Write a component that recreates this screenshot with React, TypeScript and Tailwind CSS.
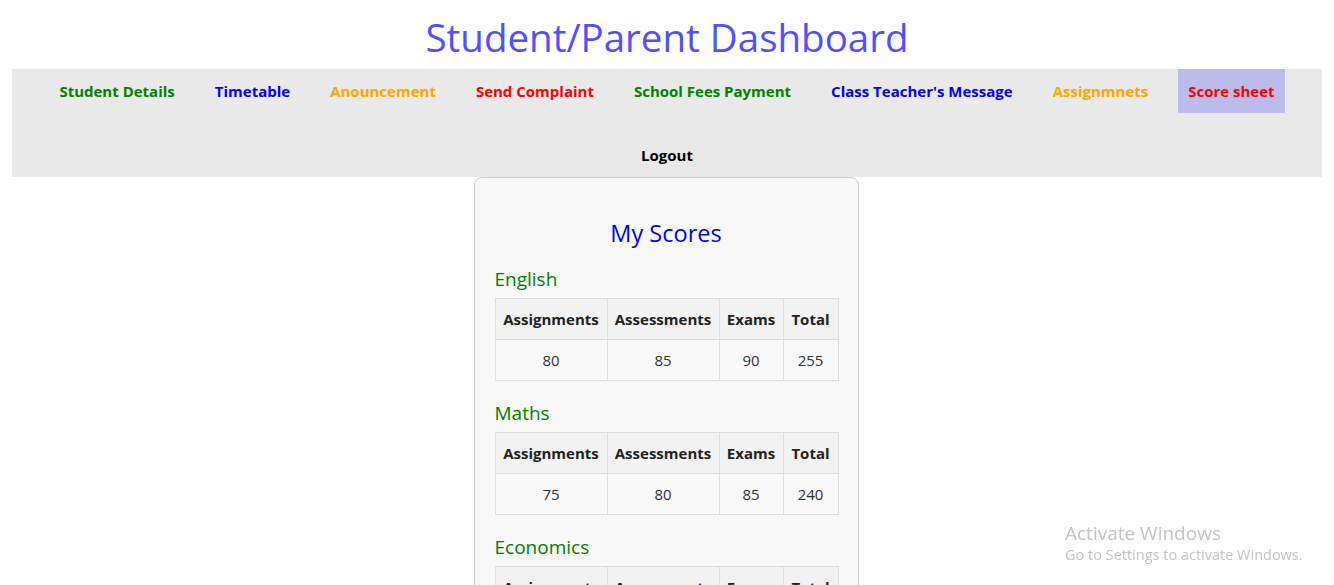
import React from "react";

const navRow1 = [
  { label: "Student Details", color: "text-[#008000]" },
  { label: "Timetable", color: "text-[#0000ff]" },
  { label: "Anouncement", color: "text-[#ffa500]" },
  { label: "Send Complaint", color: "text-[#ff0000]" },
  { label: "School Fees Payment", color: "text-[#008000]" },
  { label: "Class Teacher's Message", color: "text-[#0000ff]" },
  { label: "Assignmnets", color: "text-[#ffa500]" },
  { label: "Score sheet", color: "text-[#ff0000]", active: true },
];

const subjects = [
  { name: "English", scores: [80, 85, 90, 255] },
  { name: "Maths", scores: [75, 80, 85, 240] },
  { name: "Economics", scores: [70, 75, 80, 225] },
];

const font = { fontFamily: '"Open Sans", "Noto Sans", sans-serif' };

export default function App() {
  return (
    <div className="min-h-screen bg-white" style={font}>
      <h1 className="pt-[13px] mb-2 text-center text-[38.5px] leading-[48px] font-normal text-[#5050ff]">
        Student/Parent Dashboard
      </h1>
      <nav className="mx-[12px] bg-[#e9e9e9] flex flex-col gap-5">
        <div className="flex justify-center gap-5">
          {navRow1.map((item) => (
            <a
              key={item.label}
              href="#"
              className={`h-[44px] px-[10px] flex items-center text-[15px] font-bold whitespace-nowrap ${item.color} ${
                item.active ? "bg-[#bcbcec]" : ""
              }`}
            >
              {item.label}
            </a>
          ))}
        </div>
        <div className="flex justify-center">
          <a href="#" className="h-[44px] px-[10px] flex items-center text-[15px] font-bold text-black">
            Logout
          </a>
        </div>
      </nav>
      <div className="flex justify-center pr-[2px]">
        <div className="w-[385px] border border-[#cccccc] rounded-lg bg-[#f8f8f8] px-5 pt-5 pb-5">
          <h2 className="mt-[19px] mb-[17px] text-center text-[23.5px] leading-8 text-[#0000ff]">My Scores</h2>
          {subjects.map((s) => (
            <section key={s.name} className="mb-[19px]">
              <h3 className="pt-[1px] mb-[7px] text-[19px] leading-6 text-[#008000]">{s.name}</h3>
              <table className="w-full table-fixed border-collapse text-[15px] text-[#222]">
                <colgroup>
                  <col className="w-[112px]" />
                  <col className="w-[112px]" />
                  <col className="w-[64px]" />
                  <col className="w-[55px]" />
                </colgroup>
                <thead>
                  <tr className="bg-[#f2f2f2]">
                    {["Assignments", "Assessments", "Exams", "Total"].map((h) => (
                      <th key={h} className="border border-[#dddddd] py-2 px-0 leading-6 font-bold text-center whitespace-nowrap">
                        {h}
                      </th>
                    ))}
                  </tr>
                </thead>
                <tbody>
                  <tr className="bg-[#f9f9f9]">
                    {s.scores.map((v, i) => (
                      <td key={i} className="border border-[#dddddd] py-2 leading-6 text-center text-[#333]">
                        {v}
                      </td>
                    ))}
                  </tr>
                </tbody>
              </table>
            </section>
          ))}
        </div>
      </div>
      <div className="fixed left-[1065px] bottom-[20px] text-[#c4c4c4] pointer-events-none whitespace-nowrap">
        <div className="text-[19px] leading-6">Activate Windows</div>
        <div className="text-[14.5px] leading-5">Go to Settings to activate Windows.</div>
      </div>
    </div>
  );
}
